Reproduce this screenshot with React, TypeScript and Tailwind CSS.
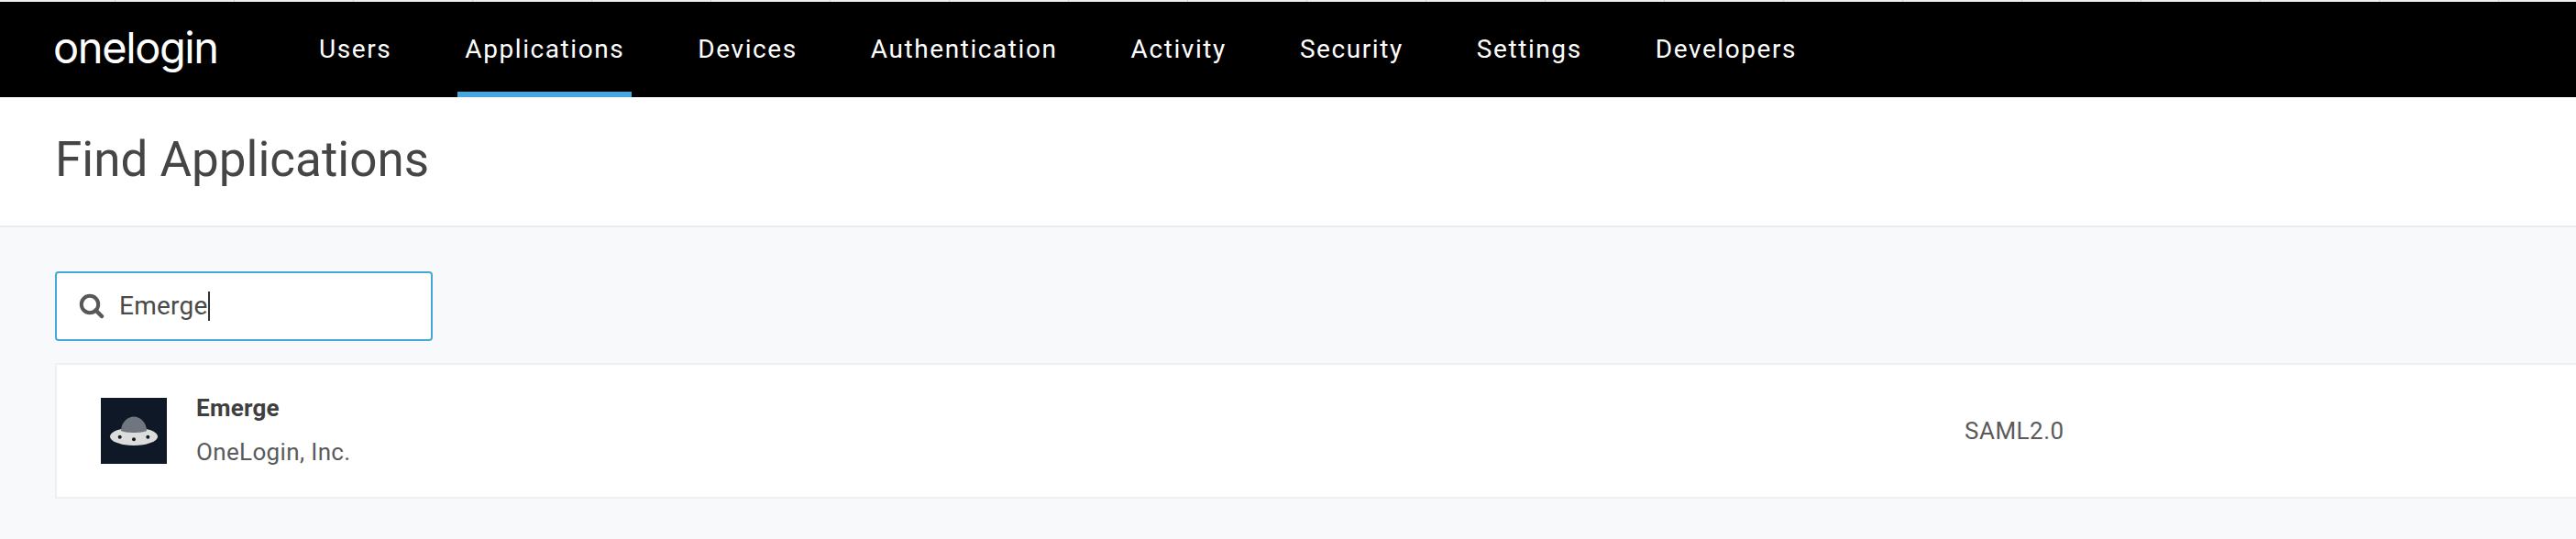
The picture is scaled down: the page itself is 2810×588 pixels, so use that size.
import React from "react";

const items = ["Users", "Applications", "Devices", "Authentication", "Activity", "Security", "Settings", "Developers"];

export default function App() {
  return (
    <div className="w-[2810px] h-[588px] overflow-hidden bg-[#f8f9fb] flex flex-col font-['Roboto',sans-serif]">
      <div className="h-[2px] shrink-0 bg-[repeating-linear-gradient(90deg,#f0eef0_0,#f0eef0_125px,#d4d4d4_125px,#d4d4d4_126px,#f0eef0_126px,#f0eef0_130px)]" />
      <nav className="h-[104px] bg-black shrink-0 flex items-stretch pl-[58px]">
        <div className="w-[282px] shrink-0 flex items-center text-white font-['Inter',sans-serif] text-[47px] font-normal tracking-[-1.4px] pb-[4px]">onelogin</div>
        <div className="flex items-stretch">
          {items.map((t) => (
            <div
              key={t}
              className={
                "px-[8px] flex items-center text-white text-[28px] tracking-[1.58px] border-b-[6px] mr-[64px] pt-[6px] " +
                (t === "Applications" ? "border-[#45a7dd]" : "border-transparent")
              }
            >
              {t}
            </div>
          ))}
        </div>
      </nav>
      <header className="h-[142px] bg-white border-b-2 border-[#e9ebee] shrink-0 flex items-center pl-[60px] pb-[2px] text-[#454545] text-[53px]">
        Find Applications
      </header>
      <main className="px-[60px] pt-[48px]">
        <div className="w-[412px] h-[76px] bg-white border-2 border-[#45a7dd] rounded-[4px] flex items-center pl-[24px]">
          <svg width="28" height="28" viewBox="0 0 28 28" fill="none" className="mr-[16px] shrink-0">
            <circle cx="12" cy="12" r="9.2" stroke="#585858" strokeWidth="4" />
            <path d="M18.5 18.5L25 25" stroke="#585858" strokeWidth="4.5" strokeLinecap="round" />
          </svg>
          <span className="text-[#4a4a4a] text-[28px] tracking-[0.25px]">Emerge</span>
          <span className="w-[2px] h-[32px] bg-[#333333]" />
        </div>
        <div className="mt-[24px] h-[148px] w-[2760px] bg-white border-2 border-r-0 border-[#eff0f2] flex items-center pl-[48px]">
          <svg width="72" height="72" viewBox="0 0 72 72" className="shrink-0">
            <rect width="72" height="72" fill="#0e1826" />
            <ellipse cx="36" cy="42.2" rx="26" ry="9.7" fill="#dcdcdc" />
            <path d="M22 36C22 27 29 20.5 36 20.5C43 20.5 50 27 50 36C45 38.6 27 38.6 22 36Z" fill="#6f7680" />
            <circle cx="20.7" cy="42.7" r="2" fill="#0e1826" />
            <circle cx="36" cy="45.3" r="2" fill="#0e1826" />
            <circle cx="51.3" cy="42.7" r="2" fill="#0e1826" />
          </svg>
          <div className="ml-[32px] w-[1929px] shrink-0 flex flex-col">
            <span className="text-[#3f3f3f] text-[26px] font-bold leading-[30px] tracking-[0.25px] -mt-[2px]">Emerge</span>
            <span className="text-[#5a5a5a] text-[26px] leading-[30px] mt-[18px] tracking-[0.35px]">OneLogin, Inc.</span>
          </div>
          <span className="text-[#5a5a5a] text-[26px] tracking-[0.5px]">SAML2.0</span>
        </div>
      </main>
    </div>
  );
}
